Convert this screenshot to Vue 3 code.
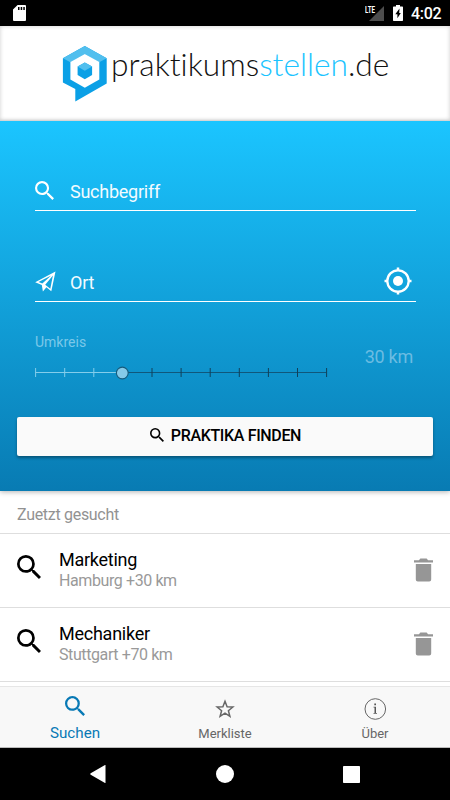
<script setup>
const searchPath =
  'M15.5 14h-.79l-.28-.27A6.471 6.471 0 0 0 16 9.5 6.5 6.5 0 1 0 9.5 16c1.61 0 3.09-.59 4.23-1.57l.27.28v.79l5 4.99L20.49 19l-4.99-5zm-6 0C7.01 14 5 11.99 5 9.5S7.01 5 9.5 5 14 7.01 14 9.5 11.99 14 9.5 14z'

const radius = 30
const ticks = Array.from({ length: 11 }, (_, i) => ({
  x: 0.6 + i * 29.1,
  active: i * 10 < radius,
}))

const recent = [
  { term: 'Marketing', place: 'Hamburg +30 km' },
  { term: 'Mechaniker', place: 'Stuttgart +70 km' },
]
</script>

<template>
  <div class="screen">
    <div class="status">
      <svg class="sd" width="13" height="16" viewBox="0 0 13 16">
        <path fill="#fff" d="M4.6 0H12a1 1 0 0 1 1 1v14a1 1 0 0 1-1 1H1a1 1 0 0 1-1-1V4.6z" />
        <path d="M5 2h1.5v3H5zM7.7 2h1.5v3H7.7zM10.3 2h1.5v3h-1.5z" />
      </svg>
      <svg class="signal" width="20" height="17" viewBox="0 0 20 17">
        <path fill="#4d4d4d" d="M19 1v15H4z" />
        <text class="lte" x="0" y="8" textLength="10" lengthAdjust="spacingAndGlyphs">LTE</text>
      </svg>
      <svg class="battery" width="10" height="16" viewBox="0 0 10 16">
        <path fill="#fff" d="M3 0h4v1.500h2.300a.7.7 0 0 1 .7.7v13.100a.7.7 0 0 1-.7.7H.7a.7.7 0 0 1-.7-.7V2.200a.7.7 0 0 1 .7-.7H3z" />
        <path d="M6.500 3.500 2.300 9.300h2.100v4L7.800 7.900H6.200z" />
      </svg>
      <span class="time">4:02</span>
    </div>

    <header class="header">
      <svg class="mark" width="45" height="57" viewBox="0 0 45 57">
        <path fill="#0ba0e6" d="M22.800 1 44.700 13.200V38.500L13.300 56.500V44L.9 37.400V13.200z" />
        <path fill="#51bfee" d="M22.800 1 44.700 13.200 37.200 17.200 22.800 9 8.400 17.200 .9 13.200z" />
        <path fill="#fff" d="M22.800 8.900 37.300 17.100V34.400L22.800 42.700 8.400 34.400V17.100z" />
        <path fill="#0ba0e6" d="M22.800 17.600 30.100 21.600V30L22.800 34.200 15.600 30V21.600z" />
        <path fill="#51bfee" d="M22.800 17.600 30.100 21.600 22.800 25.800 15.600 21.600z" />
      </svg>
      <span class="wordmark">praktikums<span class="accent">stellen</span>.de</span>
    </header>

    <main class="hero">
      <div class="field">
        <svg class="field-icon" width="19" height="19" viewBox="3 3 17.500 17.500"><path :d="searchPath" /></svg>
        <span class="placeholder">Suchbegriff</span>
      </div>
      <div class="field place">
        <svg class="field-icon" width="21" height="21" viewBox="0 0 21 21">
          <path fill-rule="evenodd" d="M20.500 .5 16.300 20.200 11.400 16.300 7.900 20.400 6.800 14 .2 11.200zM16.200 4.400 3.500 11.100 7.300 12.500zM17.900 4.400 10.200 13.800 15.300 17.700z" />
        </svg>
        <span class="placeholder">Ort</span>
        <svg class="locate" width="28" height="28" viewBox="0 0 28 28">
          <circle cx="14" cy="14" r="10.700" fill="none" stroke="#fff" stroke-width="2.300" />
          <circle cx="14" cy="14" r="5" fill="#fff" />
          <path stroke="#fff" stroke-width="2.500" d="M14 .5v3M14 24.500v3M.5 14h3M24.500 14h3" />
        </svg>
      </div>
      <div class="range">
        <div class="range-main">
          <span class="range-label">Umkreis</span>
          <svg class="slider" width="293" height="16" viewBox="0 0 293 16">
            <path stroke="#10577b" stroke-width="1.200" d="M87 7.500h204.500" />
            <path stroke="#84cdeb" stroke-width="1.200" d="M.5 7.500H87" />
            <path
              v-for="t in ticks"
              :key="t.x"
              :stroke="t.active ? '#84cdeb' : '#10405a'"
              :d="`M${t.x} 3v9`"
            />
            <circle cx="87.300" cy="8" r="5.900" fill="#86cae8" stroke="#155b7c" stroke-width="1.100" />
          </svg>
        </div>
        <span class="range-value">{{ radius }} km</span>
      </div>
      <button class="find">
        <svg width="14" height="14" viewBox="3 3 17.500 17.500"><path :d="searchPath" /></svg>
        <span>PRAKTIKA FINDEN</span>
      </button>
    </main>

    <section class="list">
      <h2 class="list-header">Zuetzt gesucht</h2>
      <div v-for="item in recent" :key="item.term" class="row">
        <svg width="24" height="24" viewBox="3 3 17.500 17.500"><path :d="searchPath" /></svg>
        <div class="row-text">
          <span class="term">{{ item.term }}</span>
          <span class="where">{{ item.place }}</span>
        </div>
        <svg class="trash" width="20" height="24" viewBox="0 0 20 24">
          <path d="M0 2.200h4.900L6.400.500h6.200l1.500 1.700H19v2.300H0zM1.800 6h15.400v15.500a2 2 0 0 1-2 2H3.800a2 2 0 0 1-2-2z" />
        </svg>
      </div>
    </section>

    <nav class="tabs">
      <div class="tab active">
        <svg width="20" height="20" viewBox="3 3 17.500 17.500"><path :d="searchPath" /></svg>
        <span>Suchen</span>
      </div>
      <div class="tab">
        <svg width="20" height="20" viewBox="0 0 20 20">
          <path fill="none" stroke="#666" stroke-width="1.500" d="M10 2.300 12.100 7.700 17.900 8 13.400 11.700 14.900 17.400 10 14.200 5.100 17.400 6.600 11.700 2.100 8 7.900 7.700z" />
        </svg>
        <span>Merkliste</span>
      </div>
      <div class="tab">
        <svg width="22" height="22" viewBox="0 0 22 22">
          <circle cx="11.300" cy="11" r="10.300" fill="none" stroke="#666" />
          <path fill="#555" d="M10.300 5.500h1.700v1.700h-1.700zM9.500 8.800H12v6.300h1v.7H9.500v-.7h1V9.500h-1z" />
        </svg>
        <span>Über</span>
      </div>
    </nav>

    <div class="system">
      <svg width="16" height="18" viewBox="0 0 16 18"><path d="M15.500.3v17.400q0 .5-.5.200L.7 9.700a.8.8 0 0 1 0-1.400L15 .1q.5-.3.5.2z" /></svg>
      <svg width="18" height="18" viewBox="0 0 18 18"><circle cx="9" cy="9" r="9" /></svg>
      <svg width="17" height="17" viewBox="0 0 17 17"><rect width="17" height="17" rx=".8" /></svg>
    </div>
  </div>
</template>

<style>
body {
  margin: 0;
}
</style>

<style scoped>
.screen {
  width: 450px;
  height: 800px;
  display: flex;
  flex-direction: column;
  overflow: hidden;
  background: #fff;
  font-family: Roboto, sans-serif;
}
.screen svg {
  display: block;
  flex: none;
}
.status {
  height: 26px;
  flex: none;
  box-sizing: border-box;
  padding: 0 9px 0 13px;
  display: flex;
  align-items: center;
  background: #000;
}
.signal {
  margin-left: auto;
  margin-right: 8px;
}
.lte {
  fill: #fff;
  font-size: 9px;
  font-weight: 700;
}
.time {
  width: 30px;
  margin-left: 8px;
  color: #fff;
  font-size: 16px;
  letter-spacing: -0.3px;
  font-weight: 500;
  line-height: 26px;
  padding-top: 2px;
}
.header {
  height: 95px;
  flex: none;
  box-sizing: border-box;
  padding: 19px 0 0 62px;
  display: flex;
  align-items: flex-start;
  background: #fff;
  box-shadow: inset 0 0 4px rgba(0, 0, 0, 0.2);
}
.wordmark {
  margin-left: 4px;
  font-family: Lato, sans-serif;
  font-weight: 300;
  font-size: 31.700px;
  font-variant-ligatures: none;
  line-height: 38px;
  color: #111;
  white-space: nowrap;
}
.accent {
  color: #1bc4ff;
}
.hero {
  height: 370px;
  flex: none;
  box-sizing: border-box;
  padding: 43px 17px 0;
  display: flex;
  flex-direction: column;
  background: linear-gradient(#1bc5ff, #087bb3);
  box-shadow: 0 1px 5px rgba(0, 0, 0, 0.3);
}
.field {
  height: 47px;
  flex: none;
  box-sizing: border-box;
  margin: 0 17px 0 18px;
  padding-top: 7px;
  display: flex;
  align-items: center;
  border-bottom: 1px solid #fff;
}
.field.place {
  margin-top: 44px;
}
.field-icon {
  fill: #fff;
}
.placeholder {
  margin-left: 16px;
  padding-top: 2px;
  color: #f2fbff;
  font-size: 18px;
  letter-spacing: -0.25px;
  line-height: 24px;
}
.place .placeholder {
  margin-left: 14px;
}
.locate {
  margin: 0 4px 2px auto;
}
.range {
  height: 114.500px;
  flex: none;
  margin: 0 20px 0 18px;
  display: flex;
  justify-content: space-between;
}
.range-main {
  padding-top: 30px;
}
.range-label {
  display: block;
  font-size: 14px;
  line-height: 20px;
  color: #7bc8e9;
}
.slider {
  margin-top: 13px;
}
.range-value {
  padding-top: 43px;
  font-size: 18px;
  letter-spacing: -0.25px;
  line-height: 24px;
  color: #6bbce2;
}
.find {
  height: 39.500px;
  flex: none;
  padding: 0 0 0 1px;
  display: flex;
  align-items: center;
  justify-content: center;
  gap: 7px;
  border: 0;
  border-radius: 2px;
  background: #fafafa;
  box-shadow: 0 2px 3px rgba(0, 0, 0, 0.35);
  font-family: Roboto, sans-serif;
  font-size: 16px;
  letter-spacing: -0.35px;
  font-weight: 500;
  color: #000;
}
.find svg {
  margin-bottom: 2px;
}
.find span {
  line-height: 18px;
  margin-bottom: 1px;
}
.list {
  height: 195px;
  flex: none;
}
.list-header {
  height: 43px;
  box-sizing: border-box;
  margin: 0;
  padding: 4px 17px 0;
  border-bottom: 1px solid #dedede;
  font-size: 16px;
  letter-spacing: -0.3px;
  font-weight: 400;
  line-height: 40px;
  color: #929292;
}
.row {
  height: 74px;
  box-sizing: border-box;
  padding: 0 16px 0 17px;
  display: flex;
  align-items: center;
  border-bottom: 1px solid #dedede;
}
.row > svg:first-child {
  margin-bottom: 7px;
}
.row-text {
  flex: 1;
  margin-left: 18px;
  display: flex;
  flex-direction: column;
}
.term {
  font-size: 18px;
  letter-spacing: -0.25px;
  line-height: 20px;
  color: #000;
}
.where {
  font-size: 16px;
  letter-spacing: -0.4px;
  line-height: 21px;
  color: #999;
}
.trash {
  margin-bottom: 1px;
  fill: #969696;
}
.tabs {
  height: 62px;
  flex: none;
  box-sizing: border-box;
  display: flex;
  border-top: 1px solid #e6e6e6;
  border-bottom: 1px solid #bbb;
  background: #f8f8f8;
}
.tab {
  flex: 1;
  display: flex;
  flex-direction: column;
  align-items: center;
  color: #666;
  font-size: 13px;
  line-height: 18px;
}
.tab svg {
  margin: 12px 0 6px;
}
.tab:last-child svg {
  margin: 11px 0 5px;
}
.tab.active {
  color: #0879b5;
  font-size: 15.200px;
}
.tab.active svg {
  margin: 9px 0 8px;
  fill: #0879b5;
}
.system {
  height: 52px;
  flex: none;
  box-sizing: border-box;
  padding: 0 90px;
  display: flex;
  align-items: center;
  justify-content: space-between;
  background: #000;
}
.system svg {
  fill: #fff;
}
</style>
